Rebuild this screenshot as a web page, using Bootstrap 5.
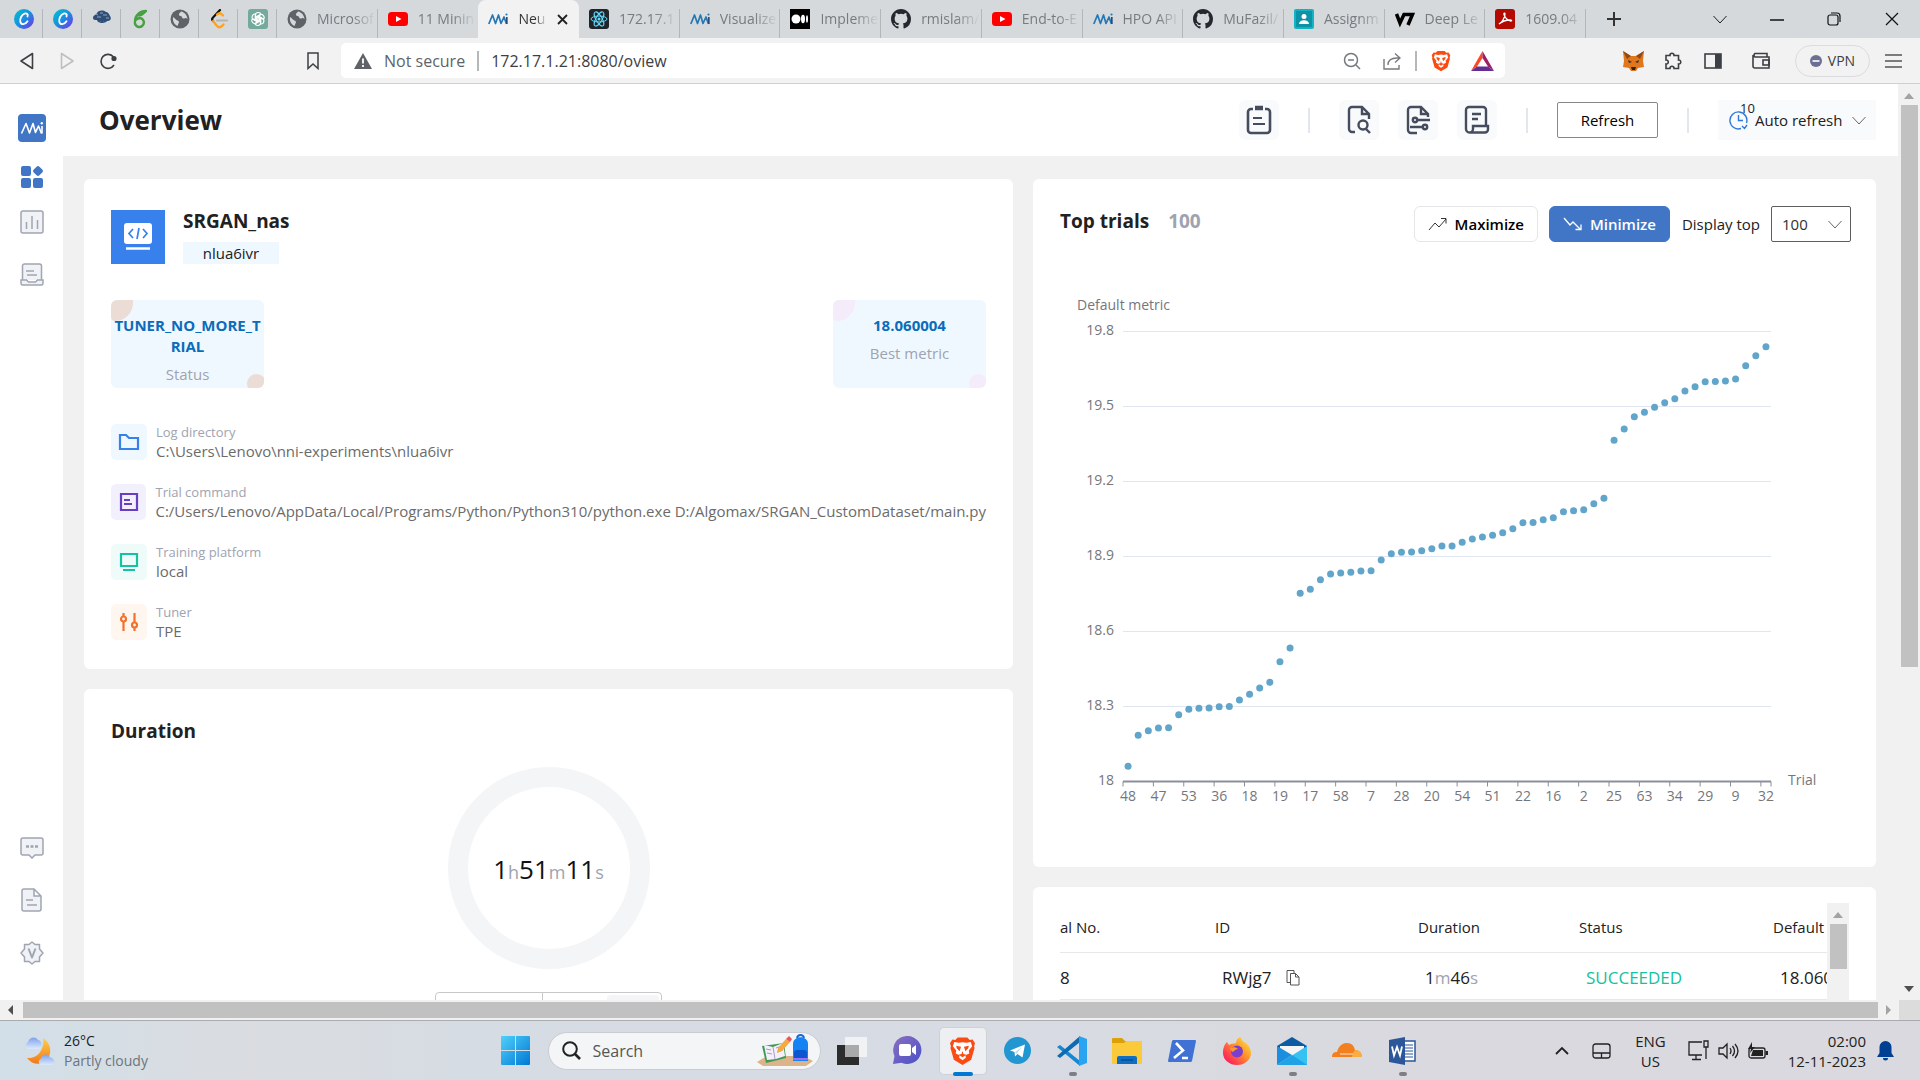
<!DOCTYPE html>
<html lang="en">
<head>
<meta charset="utf-8">
<meta name="viewport" content="width=device-width, initial-scale=1">
<title>Neural Network Intelligence</title>
<link href="https://cdn.jsdelivr.net/npm/bootstrap@5.3.0/dist/css/bootstrap.min.css" rel="stylesheet">
<style>
  body { font-family: "Open Sans", "Noto Sans", sans-serif; font-size: 15px; line-height: 20px; color: #212121; }
  svg { display: block; flex: none; }
  button, select { font-family: inherit; }
  .plain { background: none; border: 0; padding: 0; color: inherit; }

  /* browser tabs */
  .tabstrip { height: 38px; background: #d5d9dc; padding-left: 4px; }
  .tab-item { height: 38px; padding-left: 10px; font-size: 14px; color: #777b7f; position: relative; white-space: nowrap; text-decoration: none; overflow: hidden; }
  .tab-item::after { content: ""; position: absolute; right: 0; top: 9px; bottom: 0; width: 1px; background: #b4b7ba; }
  .tab-pin { width: 39px; flex: none; }
  .tab-wide { flex: 1 1 0; min-width: 0; padding-right: 2px; }
  .tab-label { flex: 1; min-width: 0; margin-left: 10px; overflow: hidden; -webkit-mask-image: linear-gradient(90deg, #000 60%, transparent); mask-image: linear-gradient(90deg, #000 60%, transparent); }
  .tab-on { background: #f2f2f2; border-radius: 8px 8px 0 0; color: #333; }
  .tab-on::after, .tab-prev::after { display: none; }
  .tab-on .tab-label { flex: none; width: 29px; }
  .tab-close { margin-left: 10px; }
  .win-tools { width: 334px; flex: none; color: #222; }

  /* address bar */
  .toolbar { height: 46px; background: #f2f2f2; border-bottom: 1px solid #cfd0d2; color: #3c3f43; padding: 0 18px 0 19px; }
  .nav-tools { width: 322px; gap: 23px; }
  .bookmark { margin: 0 22px 0 auto; }
  .url-box { height: 35px; background: #fff; border-radius: 5px; padding: 0 11px 0 13px; font-size: 16px; color: #5f6368; gap: 12px; }
  .url-field { border: 0; outline: 0; background: none; color: #3c4043; padding: 0; min-width: 0; }
  .v-rule { width: 2px; height: 20px; background: #b5b7b9; }
  .ext-tools { padding-left: 118px; }
  .vpn { height: 32px; width: 75px; border: 1px solid #dcdcdf; border-radius: 16px; font-size: 14px; gap: 6px; }

  /* page frame */
  .viewport-row { flex: 1 1 0; min-height: 0; }
  .side { width: 63px; background: #fff; padding: 30px 0 35px; flex: none; }
  .side-link { display: block; }
  .page-head { height: 72px; background: #fff; padding: 0 22px 0 36px; }
  .page-title { font-size: 26px; font-weight: 700; line-height: 32px; margin: 0; }
  .sq-btn { width: 40px; height: 40px; background: #f8fafc; border-radius: 6px; }
  .sep { width: 2px; height: 25px; background: #e2e6ee; }
  .btn-refresh { width: 101px; height: 36px; border: 1px solid #8a8886; border-radius: 2px; background: #fff; font-size: 15px; font-weight: 500; }
  .btn-auto { width: 158px; height: 40px; background: #f8fafc; font-size: 15px; padding: 0 10px 0 11px; gap: 7px; position: relative; }
  .auto-num { position: absolute; left: 22px; top: -1px; font-size: 13px; line-height: 18px; }
  .board { background: #f1f1f1; padding: 23px 22px 0 21px; gap: 20px; }
  .board-l { flex: 929 1 0; min-width: 0; gap: 20px; }
  .board-r { flex: 843 1 0; min-width: 0; gap: 20px; }
  .panel { background: #fff; border-radius: 6px; padding: 27px; flex: none; }
  .panel-title { font-size: 19px; line-height: 24px; font-weight: 700; margin: 0; }

  /* experiment info */
  .panel-info { padding-top: 31px; }
  .panel-info .panel-title { line-height: 22px; }
  .exp-mark { width: 54px; height: 54px; background: #3881ed; }
  .exp-id { width: 96px; height: 22px; background: #f0f8ff; text-align: center; line-height: 22px; font-size: 15px; }
  .metric-box { width: 153px; height: 88px; background: #f0f8ff; border-radius: 6px; text-align: center; padding-top: 15px; position: relative; overflow: hidden; color: #9ea3b0; }
  .metric-box b { display: block; position: relative; color: #0a6cba; font-weight: 700; font-size: 15px; line-height: 21px; margin-bottom: 7px; word-break: break-all; }
  .metric-box::before, .metric-box::after { content: ""; position: absolute; background: var(--tint); }
  .metric-box::before { left: 0; top: 0; width: 22px; height: 21px; border-radius: 0 0 18px 4px; }
  .metric-box::after { right: -2px; bottom: -5px; width: 19px; height: 19px; border-radius: 50%; }
  .tint-warm { --tint: #ecdcd6; }
  .tint-pink { --tint: #f4ecfa; }
  .info-list { gap: 22px; margin: 36px 0 0; }
  .info-ico { width: 36px; height: 36px; border-radius: 5px; }
  .info-list dt { font-weight: 400; font-size: 13px; line-height: 17px; color: #9ea3b0; }
  .info-list dd { margin: 0; color: #6b6b6b; line-height: 21px; white-space: nowrap; font-size: 15px; }

  /* duration */
  .panel-duration { padding-top: 30px; }
  .ring { width: 202px; height: 202px; border: 20px solid #f3f5f7; border-radius: 50%; font-size: 26px; line-height: 32px; color: #111; padding-top: 4px; margin: 24px auto 0; }
  .ring small, .unit { color: #9ea3b0; }
  .ring small { font-size: 18px; }
  .limit-box { width: 227px; height: 48px; border: 1px solid #c8c8c8; border-radius: 4px; margin: 23px auto 0; }
  .limit-box div { width: 107px; border-right: 1px solid #c8c8c8; }
  .limit-box span { width: 52px; height: 40px; margin: 2px; background: #f3f5f7; border-radius: 4px; }

  /* top trials */
  .panel-trials { height: 688px; padding-left: 0; padding-right: 0; }
  .trials-head { padding: 0 25px 0 27px; }
  .trials-head .panel-title { line-height: 30px; align-self: flex-start; }
  .btn-mode { height: 36px; border: 1px solid #e4e6ea; border-radius: 6px; font-size: 15px; font-weight: 600; background: #fff; padding: 0 13px; gap: 8px; }
  .btn-mode-on { background: #4175c5; border-color: #4175c5; color: #fff; }
  .top-select { width: 80px; height: 36px; border: 1px solid #605e5c; border-radius: 2px; appearance: none; font-size: 15px; padding: 0 10px; color: #323130; background: #fff url("data:image/svg+xml,%3Csvg xmlns='http://www.w3.org/2000/svg' width='14' height='9' fill='none' stroke='%23666'%3E%3Cpath d='M.5 1l6.500 7 6.500-7'/%3E%3C/svg%3E") no-repeat right 8px center; }
  .chart text { font-size: 14px; fill: #75767c; font-family: "Open Sans", sans-serif; }

  /* trial table */
  .panel-table { padding-top: 16px; padding-bottom: 0; }
  .trial-scroll { height: 140px; overflow: hidden; }
  .trial-grid { table-layout: fixed; width: 100%; white-space: nowrap; }
  .trial-grid th { font-weight: 500; font-size: 15px; height: 49px; padding: 0; border-bottom: 1px solid #e8e8e8; overflow: hidden; }
  .trial-grid td { height: 47px; padding: 4px 0 0 7px; font-size: 17px; border-bottom: 1px solid #e8e8e8; overflow: hidden; }
  .trial-grid td:first-child { padding-left: 0; }
  .c-no { width: 155px; } .c-id { width: 203px; } .c-dur { width: 161px; } .c-st { width: 194px; }
  .ok { color: #13c2a0; }

  /* scrollbars */
  .bar-v { width: 22px; background: #f1f1f1; flex: none; padding: 9px 0 8px; }
  .bar-v i, .bar-h i { background: #c1c1c1; }
  .bar-v i { width: 17px; height: 562px; margin-top: 6px; }
  .bar-t { padding: 9px 0; }
  .bar-t i { height: 45px; margin-top: 6px; }
  .bar-h { height: 20px; background: #f1f1f1; flex: none; }
  .bar-h i { height: 16px; margin: 2px 7px 0; }
  .bar-corner { width: 21px; height: 20px; background: #dcdcdc; }

  /* taskbar */
  .taskbar { height: 60px; flex: none; border-top: 1px solid #a9abae; background: linear-gradient(90deg, #d2dfe8 0, #dadce0 250px, #d6dce4 500px, #d7dbe3 950px, #d9dae0 1300px, #d9d9df 100%); font-size: 14px; }
  .task-l, .task-r { flex: 1 1 0; }
  .task-l { padding-left: 24px; gap: 9px; }
  .task-r { padding-right: 26px; font-size: 15px; }
  .task-mid { margin-left: 12px; }
  .start-btn { margin-right: 18px; }
  .search-pill { width: 273px; height: 38px; border-radius: 19px; background: #f3f5f7; border: 1px solid #c9ccd1; padding: 0 6px 0 13px; gap: 12px; margin-right: 4px; }
  .search-pill input { flex: 1; min-width: 0; border: 0; outline: 0; background: none; padding: 0; color: #555; font-size: 16px; }
  .search-pill input::placeholder { color: #555; opacity: 1; }
  .task-app { width: 55px; height: 58px; position: relative; }
  .task-app.running::after { content: ""; position: absolute; left: 24px; bottom: 4px; width: 8px; height: 4px; border-radius: 2px; background: #7f7f83; }
  .task-app.focused::before { content: ""; position: absolute; left: 4px; top: 5px; width: 48px; height: 48px; border-radius: 5px; background: #eeeff3; border: 1px solid #cfd1d6; }
  .task-app.focused::after { content: ""; position: absolute; left: 18px; bottom: 4px; width: 20px; height: 4px; border-radius: 2px; background: #0078d4; }
  .task-app svg { position: relative; }
</style>
<script src="https://cdn.jsdelivr.net/npm/bootstrap@5.3.0/dist/js/bootstrap.bundle.min.js"></script>
</head>
<body class="d-flex flex-column vh-100 overflow-hidden">

<svg width="0" height="0" class="position-absolute" aria-hidden="true">
  <defs>
    <linearGradient id="gCanva" x1="0" y1="0" x2="1" y2="1"><stop offset="0" stop-color="#00c4cc"/><stop offset=".5" stop-color="#1a8fe0"/><stop offset="1" stop-color="#7d2ae8"/></linearGradient>
    <linearGradient id="gWin" x1="0" y1="0" x2="1" y2="1"><stop offset="0" stop-color="#4fd1fb"/><stop offset="1" stop-color="#0277d4"/></linearGradient>
    <linearGradient id="gChat" x1="0" y1="0" x2="1" y2="1"><stop offset="0" stop-color="#8b6fc0"/><stop offset="1" stop-color="#4a50c8"/></linearGradient>
    <linearGradient id="gFire" x1="1" y1="0" x2="0" y2="1"><stop offset="0" stop-color="#fff04a"/><stop offset=".4" stop-color="#ff9a2a"/><stop offset=".8" stop-color="#ff2e55"/><stop offset="1" stop-color="#e01590"/></linearGradient>
    <linearGradient id="gMoon" x1="0" y1="0" x2="0" y2="1"><stop offset="0" stop-color="#ffd04a"/><stop offset="1" stop-color="#f07a1c"/></linearGradient>
    <linearGradient id="gCloud" x1="0" y1="0" x2="0" y2="1"><stop offset="0" stop-color="#7ea3ea"/><stop offset="1" stop-color="#dce9fd"/></linearGradient>
    <symbol id="canva" viewBox="0 0 20 20"><circle cx="10" cy="10" r="10" fill="url(#gCanva)"/><path d="M13.500 7.500c1-2-.8-3.700-2.900-2.900C7.500 5.800 5.700 9.800 6.300 12.800c.7 3.400 5 3 7.200-.6" fill="none" stroke="#fff" stroke-width="1.800" stroke-linecap="round"/></symbol>
    <symbol id="globe" viewBox="0 0 20 20"><circle cx="10" cy="10" r="9.500" fill="#5f6368"/><path d="M3 8c2 1 3 3 4.500 3.500s2 2 .8 3.200c-.3 1-.5 1.600-.8 2.300C4 15.500 2.500 12 3 8zM11 2.500c-1 1.500-2.500 2-2 3.500s2.500.5 3 2c.4 1.500 1.500 2 3 1.200 1-.6 1.600 0 2.500 1-.3-4-3-7-6.500-7.700z" fill="#d5d9dc"/></symbol>
    <symbol id="yt" viewBox="0 0 20 20"><rect y="3" width="20" height="14" rx="3.500" fill="#f00"/><path d="M8 7l5.500 3L8 13z" fill="#fff"/></symbol>
    <symbol id="nni" viewBox="0 0 20 20"><path d="M.8 15L4.500 6l3 8.500L10.500 6l2.500 8.500L16 8l2.500 7" fill="none" stroke="#2577b5" stroke-width="1.700" stroke-linejoin="round"/><path d="M18.800 8v7" stroke="#274b7a" stroke-width="1.700"/><circle cx="18.500" cy="5.500" r="1.100" fill="#2577b5"/></symbol>
    <symbol id="git" viewBox="0 0 16 16"><path fill="#24292f" d="M8 0C3.580 0 0 3.580 0 8c0 3.540 2.290 6.530 5.470 7.590.4.070.55-.17.55-.38 0-.19-.01-.82-.01-1.490-2.010.37-2.530-.49-2.690-.94-.09-.23-.48-.94-.82-1.130-.28-.15-.68-.52-.01-.53.63-.01 1.080.58 1.230.82.72 1.210 1.870.87 2.330.66.07-.52.28-.87.51-1.070-1.780-.2-3.640-.89-3.640-3.950 0-.87.31-1.590.82-2.150-.08-.2-.36-1.020.08-2.120 0 0 .67-.21 2.200.82a7.600 7.600 0 0 1 4 0c1.530-1.040 2.200-.82 2.200-.82.44 1.100.16 1.920.08 2.120.51.56.82 1.270.82 2.150 0 3.070-1.870 3.750-3.650 3.950.29.25.54.73.54 1.480 0 1.070-.01 1.930-.01 2.200 0 .21.15.46.55.38A8.010 8.010 0 0 0 16 8c0-4.420-3.580-8-8-8z"/></symbol>
    <symbol id="brave" viewBox="0 0 28 30"><path d="M9 1h10l2.500 2.500 3-.3L27 7l-1 3 .5 2-3.500 12-9 5.500L5 24 1.500 12 2 10 1 7l2.500-3.800 3 .3z" fill="#fb4b13"/><path d="M14 6l4 .5 4.500-.8L24 10l-3.500 4.500.5 3-4 2 .5 2.500L14 24.500 10.500 22l.5-2.500-4-2 .5-3L4 10l1.500-4.300L10 6.500z" fill="#fff"/><path d="M7.500 9.500l5 1.200-1.500 4.500-3-3zM20.500 9.500l-5 1.200 1.500 4.500 3-3zM14 15l1 3 3 1-4 2.500L10 19l3-1z" fill="#fb4b13"/></symbol>
    <symbol id="chev" viewBox="0 0 14 9"><path d="M.5 1L7 8l6.500-7" fill="none" stroke="currentColor"/></symbol>
    <symbol id="up" viewBox="0 0 10 6"><path d="M0 6l5-6 5 6z"/></symbol>
  </defs>
</svg>

<!-- tab strip -->
<nav class="tabstrip d-flex flex-shrink-0" aria-label="Tabs">
  <a href="#" class="tab-item tab-pin d-flex align-items-center" aria-label="Canva"><svg width="20" height="20"><use href="#canva"/></svg></a>
  <a href="#" class="tab-item tab-pin d-flex align-items-center" aria-label="Canva"><svg width="20" height="20"><use href="#canva"/></svg></a>
  <a href="#" class="tab-item tab-pin d-flex align-items-center" aria-label="Tree"><svg width="20" height="20" viewBox="0 0 20 20"><path d="M1 9c0-3 3-3 4-5 2-3 6-3 9-1 2 0 3 2 4 4 2 3 0 5-3 5-1 2-4 1-5 0-2 2-5 1-5-1-2 0-4 0-4-2z" fill="#2f4f76"/><path d="M9 9h2v4l3 1H6l3-1z" fill="#2f4f76"/><path d="M5 8h4M11 6h4M4 5l2 1M14 9h3M8 4h3" stroke="#90a8c4"/></svg></a>
  <a href="#" class="tab-item tab-pin d-flex align-items-center" aria-label="Overleaf"><svg width="20" height="20" viewBox="0 0 20 20"><path d="M15 2C9 2 4 6 4 12.500A4.500 4.500 0 1 0 8.500 9C7 9 6 10 5 11M7 6c3 1 5-1 8-4" fill="none" stroke="#47a141" stroke-width="2.400" stroke-linecap="round"/></svg></a>
  <a href="#" class="tab-item tab-pin d-flex align-items-center" aria-label="Page"><svg width="20" height="20"><use href="#globe"/></svg></a>
  <a href="#" class="tab-item tab-pin d-flex align-items-center" aria-label="LeetCode"><svg width="20" height="20" viewBox="0 0 20 20" fill="none" stroke-width="2.200" stroke-linecap="round"><path d="M11 1L4 8.500c-1 1-1 2.500 0 3.500" stroke="#111"/><path d="M4 12l4 5c1.500 1.500 3.500 1.500 5 0l1.500-1.500M8 5.500c1.500-1.500 3.500-1.500 5 0l1 1" stroke="#ffa116"/><path d="M8 11.500h10" stroke="#b3b3b3"/></svg></a>
  <a href="#" class="tab-item tab-pin d-flex align-items-center" aria-label="ChatGPT"><svg width="20" height="20" viewBox="0 0 20 20"><rect width="20" height="20" rx="3" fill="#74aa9c"/><g fill="none" stroke="#fff" stroke-width="1.100"><path id="pet" d="M7.200 11.500V6.800C7.200 3 12 2.400 13 5.500L8.800 8v3.500"/><use href="#pet" transform="rotate(60 10 10)"/><use href="#pet" transform="rotate(120 10 10)"/><use href="#pet" transform="rotate(180 10 10)"/><use href="#pet" transform="rotate(240 10 10)"/><use href="#pet" transform="rotate(300 10 10)"/></g></svg></a>
  <a href="#" class="tab-item tab-wide d-flex align-items-center"><svg width="20" height="20"><use href="#globe"/></svg><span class="tab-label">Microsof</span></a>
  <a href="#" class="tab-item tab-wide tab-prev d-flex align-items-center"><svg width="20" height="20"><use href="#yt"/></svg><span class="tab-label">11 Minin</span></a>
  <a href="#" class="tab-item tab-wide tab-on d-flex align-items-center" aria-current="page"><svg width="20" height="20"><use href="#nni"/></svg><span class="tab-label">Neu</span><svg class="tab-close" width="11" height="11" viewBox="0 0 11 11"><path d="M1 1l9 9M10 1l-9 9" stroke="#222" stroke-width="1.800"/></svg></a>
  <a href="#" class="tab-item tab-wide d-flex align-items-center"><svg width="20" height="20" viewBox="0 0 20 20"><rect width="20" height="20" rx="3" fill="#20232a"/><g fill="none" stroke="#61dafb"><ellipse cx="10" cy="10" rx="8" ry="3"/><ellipse cx="10" cy="10" rx="8" ry="3" transform="rotate(60 10 10)"/><ellipse cx="10" cy="10" rx="8" ry="3" transform="rotate(120 10 10)"/></g><circle cx="10" cy="10" r="1.500" fill="#61dafb"/></svg><span class="tab-label">172.17.1</span></a>
  <a href="#" class="tab-item tab-wide d-flex align-items-center"><svg width="20" height="20"><use href="#nni"/></svg><span class="tab-label">Visualize</span></a>
  <a href="#" class="tab-item tab-wide d-flex align-items-center"><svg width="20" height="20" viewBox="0 0 20 20"><rect width="20" height="20"/><g fill="#fff"><circle cx="6" cy="10" r="4.500"/><ellipse cx="13" cy="10" rx="2" ry="4.200"/><ellipse cx="17" cy="10" rx="1" ry="3.800"/></g></svg><span class="tab-label">Impleme</span></a>
  <a href="#" class="tab-item tab-wide d-flex align-items-center"><svg width="20" height="20"><use href="#git"/></svg><span class="tab-label">rmislam/</span></a>
  <a href="#" class="tab-item tab-wide d-flex align-items-center"><svg width="20" height="20"><use href="#yt"/></svg><span class="tab-label">End-to-E</span></a>
  <a href="#" class="tab-item tab-wide d-flex align-items-center"><svg width="20" height="20"><use href="#nni"/></svg><span class="tab-label">HPO API</span></a>
  <a href="#" class="tab-item tab-wide d-flex align-items-center"><svg width="20" height="20"><use href="#git"/></svg><span class="tab-label">MuFazil/</span></a>
  <a href="#" class="tab-item tab-wide d-flex align-items-center"><svg width="20" height="20" viewBox="0 0 20 20"><rect width="20" height="20" rx="2" fill="#15b1c5"/><rect x="2" y="2" width="16" height="16" fill="#0d93a6"/><circle cx="10" cy="7.500" r="2.500" fill="#fff"/><path d="M5 15c0-5 10-5 10 0z" fill="#fff"/></svg><span class="tab-label">Assignm</span></a>
  <a href="#" class="tab-item tab-wide d-flex align-items-center"><svg width="20" height="20" viewBox="0 0 20 20" fill="none" stroke="#000" stroke-width="3.500"><path d="M1.500 5L5 14 9 5.500h8.500L13 16"/></svg><span class="tab-label">Deep Le</span></a>
  <a href="#" class="tab-item tab-wide d-flex align-items-center"><svg width="20" height="20" viewBox="0 0 20 20"><rect width="20" height="20" rx="3" fill="#b30b00"/><path d="M4 15c3-1 6-7 6-10 0-1.500-1.500-1-1 .5C10 9 13 12 16 12c1 0 1-1-1-1-3 0-8 1.500-11 4z" fill="none" stroke="#fff" stroke-width="1.300"/></svg><span class="tab-label">1609.04</span></a>
  <div class="win-tools d-flex align-items-center">
    <button class="plain" aria-label="New tab" style="margin:0 91px 0 20px"><svg width="16" height="16"><path d="M8 1v14M1 8h14" stroke="#333" stroke-width="2"/></svg></button>
    <button class="plain" aria-label="Search tabs"><svg width="14" height="9"><use href="#chev"/></svg></button>
    <button class="plain" aria-label="Minimise" style="margin:0 43px"><svg width="14" height="9"><path d="M0 5h14" stroke="#111" stroke-width="1.500"/></svg></button>
    <button class="plain" aria-label="Restore" style="margin-right:44px"><svg width="14" height="14" fill="none" stroke="#111" stroke-width="1.200"><rect x="1" y="3" width="10" height="10" rx="2"/><path d="M4 1h6a3 3 0 0 1 3 3v6"/></svg></button>
    <button class="plain" aria-label="Close window"><svg width="14" height="14"><path d="M1 1l12 12M13 1L1 13" stroke="#111" stroke-width="1.200"/></svg></button>
  </div>
</nav>

<!-- address bar -->
<div class="toolbar d-flex align-items-center flex-shrink-0">
  <div class="nav-tools d-flex align-items-center">
    <button class="plain" aria-label="Back"><svg width="17" height="18" fill="none" stroke="#3c3f43" stroke-width="1.600" stroke-linejoin="round"><path d="M13.500 1.500v15L2 9z"/></svg></button>
    <button class="plain" aria-label="Forward"><svg width="17" height="18" fill="none" stroke="#bdbfc1" stroke-width="1.600" stroke-linejoin="round"><path d="M2.500 1.500v15L14 9z"/></svg></button>
    <button class="plain" aria-label="Reload"><svg width="18" height="18" fill="none" stroke="#3c3f43" stroke-width="1.600"><path d="M15 13a7 7 0 1 1-.5-8"/><circle cx="15" cy="6.500" r="1.800" fill="#3c3f43"/></svg></button>
    <button class="plain bookmark" aria-label="Bookmark"><svg width="12" height="18" fill="none" stroke="#3c3f43" stroke-width="1.500"><path d="M1 1h10v15.500l-5-4.500-5 4.500z"/></svg></button>
  </div>
  <div class="url-box d-flex align-items-center flex-grow-1">
    <svg width="18" height="16" viewBox="0 0 18 16"><path d="M9 0l9 16H0z" fill="#5f6368"/><path d="M9 5.500v5M9 12v2" stroke="#fff" stroke-width="1.800"/></svg>
    <label for="addr">Not secure</label>
    <span class="v-rule"></span>
    <input class="url-field flex-grow-1" id="addr" type="text" value="172.17.1.21:8080/oview">
    <button class="plain" aria-label="Zoom" style="margin-right:10px"><svg width="18" height="18" fill="none" stroke="#777b7f" stroke-width="1.500"><circle cx="8" cy="8" r="6.500"/><path d="M13 13l4 4M5 8h6"/></svg></button>
    <button class="plain" aria-label="Share" style="margin-right:2px"><svg width="18" height="18" fill="none" stroke="#777b7f" stroke-width="1.400"><path d="M1 7v10h15v-4M5 13c0-5 3-7 9-7h2M12 1.500L17 6l-5 4.500"/></svg></button>
    <span class="v-rule"></span>
    <button class="plain" aria-label="Brave Shields" style="margin:0 8px 0 2px"><svg width="20" height="22"><use href="#brave"/></svg></button>
    <button class="plain" aria-label="Rewards"><svg width="23" height="20" viewBox="0 0 23 20"><path d="M11.500 0L0 20l6-4.500L11.500 7z" fill="#ff4724"/><path d="M11.500 0L23 20l-6-4.500L11.500 7z" fill="#9e1f63"/><path d="M0 20h23l-6-4.500H6z" fill="#662d91"/></svg></button>
  </div>
  <div class="ext-tools d-flex align-items-center">
    <svg width="21" height="20" viewBox="0 0 21 20"><path d="M0 0l8 5h5l8-5-1 10 1 6-6 1-2 3H8l-2-3-6-1 1-6z" fill="#e2761b"/><path d="M5 9l4 2-3 1zM16 9l-4 2 3 1z" fill="#233447"/><path d="M8 16h5l-1 3H9z" fill="#33241b"/><path d="M0 0l8 5-4 3zM21 0l-8 5 4 3z" fill="#8f4a17"/></svg>
    <button class="plain" aria-label="Extensions" style="margin:0 22px 0 20px"><svg width="18" height="18" fill="none" stroke="#3c3f43" stroke-width="1.600"><path d="M2 3.500h4c-.7-3 4.500-3 4 0h4.500V8c3-.5 3 4.500 0 4v4.500H10c.5-3-4.500-3-4 0H2V12c3 .5 3-4.500 0-4z"/></svg></button>
    <button class="plain" aria-label="Side panel"><svg width="18" height="16"><rect x="1" y="1" width="16" height="14" fill="none" stroke="#3c3f43" stroke-width="1.600"/><path d="M11 1h6v14h-6z" fill="#3c3f43"/></svg></button>
    <button class="plain" aria-label="Wallet" style="margin:0 25px 0 30px"><svg width="18" height="17" fill="none" stroke="#3c3f43" stroke-width="1.600"><path d="M15 5V1.500H3a2 2 0 0 0 0 3.500h14v11H3a2 2 0 0 1-2-2V3"/><rect x="11" y="8" width="6" height="5"/></svg></button>
    <button class="plain vpn d-flex align-items-center justify-content-center"><svg width="12" height="12"><circle cx="6" cy="6" r="6" fill="#6b7093"/><path d="M2.500 6h7" stroke="#fff" stroke-width="1.600"/></svg>VPN</button>
    <button class="plain" aria-label="Menu" style="margin-left:15px"><svg width="17" height="14"><path d="M0 1h17M0 7h17M0 13h17" stroke="#555" stroke-width="1.600"/></svg></button>
  </div>
</div>

<!-- page -->
<div class="viewport-row d-flex overflow-hidden">
  <nav class="side d-flex flex-column align-items-center" aria-label="Main">
    <a class="side-link" href="#" aria-label="NNI"><svg width="28" height="28" viewBox="0 0 28 28"><rect width="28" height="28" rx="4" fill="#4175c5"/><path d="M3.500 19.500L8 9.500l3.500 9.500L15 9.500 17.500 18.500l3-6.500 3 7.500" fill="none" stroke="#fff" stroke-width="1.600" stroke-linejoin="round"/><path d="M24 12v7.500" stroke="#fff" stroke-width="1.600"/><circle cx="23.800" cy="9.200" r="1.200" fill="#fff"/></svg></a>
    <a class="side-link" href="#" aria-label="Overview" style="margin-top:24px"><svg width="22" height="22" fill="#4175c5"><rect width="10" height="10" rx="2"/><rect y="12" width="10" height="10" rx="2"/><rect x="12" y="12" width="10" height="10" rx="2"/><rect x="13" y="1" width="8" height="8" rx="2" transform="rotate(45 17 5)"/></svg></a>
    <a class="side-link" href="#" aria-label="Trials detail" style="margin-top:22px"><svg width="24" height="24" fill="#f0f2f6" stroke="#9fa5b3" stroke-width="1.500"><rect x="1" y="1" width="22" height="22" rx="2"/><path d="M6.500 12v7M12 6v13M17.500 10v9"/></svg></a>
    <a class="side-link" href="#" aria-label="Experiment management" style="margin-top:29px"><svg width="24" height="24" fill="#f0f2f6" stroke="#9fa5b3" stroke-width="1.500"><path d="M2.500 17V3a2 2 0 0 1 2-2h15a2 2 0 0 1 2 2v14M6 8h8M7 12h10"/><path d="M1 17h5.500l2 2h7l2-2H23v3.500a1.500 1.500 0 0 1-1.500 1.500h-19A1.500 1.500 0 0 1 1 20.500z"/></svg></a>
    <a class="side-link mt-auto" href="#" aria-label="Feedback"><svg width="24" height="22" fill="#f0f2f6" stroke="#9fa5b3" stroke-width="1.500"><path d="M3 1h18a2 2 0 0 1 2 2v13a2 2 0 0 1-2 2h-6l-3 3-3-3H3a2 2 0 0 1-2-2V3a2 2 0 0 1 2-2z"/><path d="M6 9.500h3M10.500 9.500h3M15 9.500h3" stroke-width="2.500"/></svg></a>
    <a class="side-link" href="#" aria-label="Document" style="margin:29px 0"><svg width="22" height="24" fill="#f0f2f6" stroke="#9fa5b3" stroke-width="1.500"><path d="M3 1h10l7 7v13a2 2 0 0 1-2 2H3a2 2 0 0 1-2-2V3a2 2 0 0 1 2-2zM13 1v7h7M5 12h7M6 17h10"/></svg></a>
    <a class="side-link" href="#" aria-label="Version"><svg width="24" height="24" fill="#f0f2f6" stroke="#9fa5b3" stroke-width="1.500" stroke-linejoin="round"><path d="M12 1l3 2.500h4.500V8L23 12l-3.500 4v4.500H15L12 23l-3-2.500H4.500V16L1 12l3.500-4V3.500H9z"/><path d="M8.500 7.500L12 16.500l3.500-9" fill="none" stroke-width="2"/></svg></a>
  </nav>

  <div class="d-flex flex-column flex-grow-1" style="min-width:0">
    <header class="page-head d-flex align-items-center flex-shrink-0">
      <h1 class="page-title me-auto">Overview</h1>
      <button class="plain sq-btn d-flex align-items-center justify-content-center" aria-label="Experiment summary"><svg width="26" height="30" fill="none" stroke="#454c5e" stroke-width="2.600"><path d="M7 4H5a3 3 0 0 0-3 3v18a3 3 0 0 0 3 3h16a3 3 0 0 0 3-3V7a3 3 0 0 0-3-3h-2"/><path d="M9 3h8" stroke-width="4.500"/><path d="M7 13h9M7 19h12" stroke-width="2.200"/></svg></button>
      <span class="sep" style="margin:0 29px"></span>
      <button class="plain sq-btn d-flex align-items-center justify-content-center" aria-label="Search space"><svg width="26" height="30" fill="none" stroke="#454c5e" stroke-width="2.400"><path d="M9 27H6a3 3 0 0 1-3-3V5a3 3 0 0 1 3-3h10l7 7v5M16 2v7h7"/><circle cx="17" cy="20" r="4.500"/><path d="M20 24l4 4"/></svg></button>
      <button class="plain sq-btn d-flex align-items-center justify-content-center" aria-label="Config" style="margin:0 19px"><svg width="26" height="30" fill="none" stroke="#454c5e" stroke-width="2.400"><path d="M12 28H6a3 3 0 0 1-3-3V5a3 3 0 0 1 3-3h10l7 7v3M16 2v7h7M12 15h13M5 22h12"/><circle cx="10" cy="15" r="2.200"/><circle cx="20" cy="22" r="2.200"/></svg></button>
      <button class="plain sq-btn d-flex align-items-center justify-content-center" aria-label="Log files"><svg width="26" height="30" fill="none" stroke="#454c5e" stroke-width="2.400"><path d="M22 20V5a3 3 0 0 0-3-3H5a3 3 0 0 0-3 3v19a3.500 3.500 0 0 0 3.500 3.500H21a3 3 0 0 0 3-3V21H9v3a3.500 3.500 0 0 1-3.500 3.500M8 9h9M8 14h6"/></svg></button>
      <span class="sep" style="margin:0 29px"></span>
      <button class="btn-refresh">Refresh</button>
      <span class="sep" style="margin:0 29px"></span>
      <button class="plain btn-auto d-flex align-items-center"><svg width="19" height="20" fill="none" stroke="#3079d8" stroke-width="1.400"><path d="M12 18.500a8.500 8.500 0 1 1 5.500-5.500M9.500 5v5.500H14M13 16l2.500 2.500L18 15"/></svg><span class="auto-num">10</span>Auto refresh<svg class="ms-auto" width="14" height="9" color="#666"><use href="#chev"/></svg></button>
    </header>

    <main class="board d-flex flex-grow-1 overflow-hidden">
      <div class="board-l d-flex flex-column">
        <section class="panel panel-info">
          <div class="d-flex" style="gap:18px">
            <div class="exp-mark d-flex align-items-center justify-content-center"><svg width="28" height="28" viewBox="0 0 28 28"><rect width="28" height="21" rx="3" fill="#fff"/><path d="M9 6l-4 4.500L9 15M19 6l4 4.500L19 15M15 5l-2 11" fill="none" stroke="#3881ed" stroke-width="1.700"/><path d="M2 25.500h24" stroke="#fff" stroke-width="2.500"/></svg></div>
            <div class="d-flex flex-column justify-content-between"><h2 class="panel-title">SRGAN_nas</h2><div class="exp-id">nlua6ivr</div></div>
          </div>
          <div class="d-flex justify-content-between" style="margin-top:36px">
            <div class="metric-box tint-warm"><b>TUNER_NO_MORE_TRIAL</b>Status</div>
            <div class="metric-box tint-pink"><b>18.060004</b>Best metric</div>
          </div>
          <dl class="info-list d-flex flex-column">
            <div class="d-flex" style="gap:9px"><span class="info-ico d-flex align-items-center justify-content-center" style="background:#f0f8ff"><svg width="22" height="18" fill="none" stroke="#3881ed" stroke-width="2.200"><path d="M2 2h6l3 3h9v11H2z"/></svg></span><div><dt>Log directory</dt><dd>C:\Users\Lenovo\nni-experiments\nlua6ivr</dd></div></div>
            <div class="d-flex" style="gap:9px"><span class="info-ico d-flex align-items-center justify-content-center" style="background:#f3f0fe"><svg width="20" height="20" fill="none" stroke="#6a3ec2" stroke-width="2.200"><path d="M2 2h16v16H2zM5 8h6M5 12h8"/></svg></span><div><dt>Trial command</dt><dd>C:/Users/Lenovo/AppData/Local/Programs/Python/Python310/python.exe D:/Algomax/SRGAN_CustomDataset/main.py</dd></div></div>
            <div class="d-flex" style="gap:9px"><span class="info-ico d-flex align-items-center justify-content-center" style="background:#effbf8"><svg width="20" height="20" fill="none" stroke="#15c3a4" stroke-width="2.200"><path d="M2 2h16v12H2zM4 18h12"/></svg></span><div><dt>Training platform</dt><dd>local</dd></div></div>
            <div class="d-flex" style="gap:9px"><span class="info-ico d-flex align-items-center justify-content-center" style="background:#fff6ef"><svg width="20" height="20" fill="none" stroke="#f2722b" stroke-width="2.200"><circle cx="4.500" cy="7" r="2.500"/><circle cx="15.500" cy="13" r="2.500"/><path d="M4.500 1v3M4.500 10v9M15.500 1v9M15.500 16v3"/></svg></span><div><dt>Tuner</dt><dd>TPE</dd></div></div>
          </dl>
        </section>
        <section class="panel panel-duration">
          <h2 class="panel-title">Duration</h2>
          <div class="ring d-flex align-items-center justify-content-center"><span>1<small>h</small>51<small>m</small>11<small>s</small></span></div>
          <div class="limit-box d-flex justify-content-between"><div></div><span></span></div>
        </section>
      </div>

      <div class="board-r d-flex flex-column">
        <section class="panel panel-trials">
          <div class="trials-head d-flex align-items-center">
            <h2 class="panel-title">Top trials</h2><span class="panel-title unit" style="margin-left:19px">100</span>
            <button class="btn-mode d-flex align-items-center ms-auto"><svg width="19" height="14" fill="none" stroke="#333"><path d="M1 13l6-7 4 4 7-8M13 1.500h5v5"/></svg>Maximize</button>
            <button class="btn-mode btn-mode-on d-flex align-items-center" style="margin:0 12px 0 11px"><svg width="19" height="14" fill="none" stroke="#fff" stroke-width="1.300"><path d="M1 1l6 7 3-3 7 7M12.500 12.500H18v-5"/></svg>Minimize</button>
            <label for="top" style="margin-right:11px">Display top</label>
            <select class="top-select" id="top"><option>100</option></select>
          </div>
          <svg class="chart w-100" id="chart" viewBox="0 0 843 600" role="img" aria-label="Default metric by trial"></svg>
        </section>

        <section class="panel panel-table">
          <div class="trial-scroll d-flex">
            <div class="flex-grow-1 overflow-hidden">
              <table class="trial-grid">
                <colgroup><col class="c-no"><col class="c-id"><col class="c-dur"><col class="c-st"><col></colgroup>
                <thead><tr><th>al No.</th><th>ID</th><th>Duration</th><th>Status</th><th>Default</th></tr></thead>
                <tbody><tr><td>8</td><td><span class="d-flex align-items-center" style="gap:15px">RWjg7<svg width="14" height="16" fill="none" stroke="#555"><path d="M4.500 3.500h5l3.500 3.500v8h-8.500zM9.500 3.500V7H13M4 12.500H1V.500h7v2.500"/></svg></span></td><td>1<span class="unit">m</span>46<span class="unit">s</span></td><td class="ok">SUCCEEDED</td><td>18.060</td></tr></tbody>
              </table>
            </div>
            <div class="bar-v bar-t d-flex flex-column align-items-center"><svg width="10" height="6" fill="#a3a3a3"><use href="#up"/></svg><i></i></div>
          </div>
        </section>
      </div>
    </main>
  </div>

  <div class="bar-v d-flex flex-column align-items-center"><svg width="10" height="6" fill="#a3a3a3"><use href="#up"/></svg><i></i><svg class="mt-auto" width="10" height="6" fill="#505050" style="rotate:180deg"><use href="#up"/></svg></div>
</div>
<div class="bar-h d-flex">
  <svg width="16" height="20" fill="#505050"><path d="M13 5v10L8 10z"/></svg><i class="flex-grow-1"></i><svg width="14" height="20" fill="#a3a3a3"><path d="M1 5v10l5-5z"/></svg><span class="bar-corner"></span>
</div>

<!-- taskbar -->
<footer class="taskbar d-flex align-items-center">
  <div class="task-l d-flex align-items-center">
    <svg width="31" height="32" viewBox="0 0 31 32"><path d="M19 3c8 5 9 14 5 21-5 6-15 7-21-1 9 1 18-7 16-20z" fill="url(#gMoon)"/><path d="M4 14a4 4 0 0 1 0-7c1-5 8-6 10-2 4 0 5 7 1 9z" fill="url(#gCloud)"/><path d="M17 30a3.500 3.500 0 0 1 0-6.500c1-5 8-5 9-1 4 0 6 6 2 7.500z" fill="url(#gCloud)"/></svg>
    <div>26°C<br><span class="text-secondary">Partly cloudy</span></div>
  </div>
  <div class="task-mid d-flex align-items-center">
    <button class="plain start-btn" aria-label="Start"><svg width="29" height="29" fill="url(#gWin)"><path d="M1 0h13v14H0V1a1 1 0 0 1 1-1zM15 0h13a1 1 0 0 1 1 1v13H15zM0 15h14v14H1a1 1 0 0 1-1-1zM15 15h14v13a1 1 0 0 1-1 1H15z"/></svg></button>
    <div class="search-pill d-flex align-items-center">
      <svg width="19" height="19" fill="none" stroke="#222" stroke-width="2"><circle cx="8" cy="8" r="6.800"/><path d="M13 13l5 5" stroke-width="2.600"/></svg>
      <input type="search" placeholder="Search" aria-label="Search">
      <svg width="58" height="34" viewBox="0 0 58 34"><path d="M1 28l10-6h36l10 5-7 5H7z" fill="#dcb48a"/><path d="M6 12l22-3 2 15-20 5z" fill="#3f9a55"/><path d="M8 11l9 2 10-4 2 13-9 3-9 1z" fill="#f4effa"/><path d="M17 13l2 12M10 15l5 1M11 19l5 1M20 14l6-2M21 18l6-2" stroke="#a99cc4" fill="none"/><path d="M22 14l8-9 4 3-8 9-5 2z" fill="#f7a93b"/><path d="M30 5l3-3 3 3-2 3z" fill="#e8555a"/><path d="M41 4c1-4 6-4 7 0" fill="none" stroke="#1769d8" stroke-width="2"/><path d="M37 10c0-9 15-9 15 0v17H37z" fill="#1683f5"/><rect x="38" y="16" width="13" height="10" rx="3" fill="#0b57d0"/><path d="M37 24h15v2H37z" fill="#a46cf0"/></svg>
    </div>
    <button class="plain task-app d-flex align-items-center justify-content-center" aria-label="Task view"><svg width="30" height="28"><path d="M0 8h22v20H0z" fill="#2c2c2c"/><path d="M8 0h22v20H8z" fill="#f7f7f7" opacity=".8"/><path d="M8 8h14v12H8z" fill="#aaa"/></svg></button>
    <button class="plain task-app d-flex align-items-center justify-content-center" aria-label="Chat"><svg width="29" height="29"><path d="M14.500 0a14 14 0 1 1-6 26.700L0 28l1.500-8A14 14 0 0 1 14.500 0z" fill="url(#gChat)"/><rect x="6" y="8" width="12" height="12" rx="2" fill="#fff"/><path d="M19 12l4-3v10l-4-3z" fill="#fff"/></svg></button>
    <button class="plain task-app focused d-flex align-items-center justify-content-center" aria-label="Brave"><svg width="27" height="30"><use href="#brave"/></svg></button>
    <button class="plain task-app d-flex align-items-center justify-content-center" aria-label="Telegram"><svg width="27" height="27"><circle cx="13.500" cy="13.500" r="13.500" fill="#2196d0"/><path d="M6 13.500L21 7.500l-2.500 13-5-3.500-2.500 2.500-.5-4.500z" fill="#fff"/><path d="M11 15l7-5-5.500 7" fill="#bfe0f2"/></svg></button>
    <button class="plain task-app running d-flex align-items-center justify-content-center" aria-label="VS Code"><svg width="30" height="30"><path d="M0 11l3-2 20 16v5z" fill="#1389d2"/><path d="M0 20l3 2L23 6V0z" fill="#0b6cb3"/><path d="M22 0l8 3v24l-8 3z" fill="#2aa4f0"/></svg></button>
    <button class="plain task-app d-flex align-items-center justify-content-center" aria-label="File Explorer"><svg width="30" height="28"><path d="M0 2a1 1 0 0 1 1-1h9l3 3h16v5H0z" fill="#dda006"/><path d="M0 6h12l2-2h16v23H0z" fill="#fbca3a"/><path d="M5 27v-6a2 2 0 0 1 2-2h16a2 2 0 0 1 2 2v6z" fill="#0f6fc5"/><path d="M9 23h12" stroke="#0b4d91" stroke-width="1.500"/></svg></button>
    <button class="plain task-app d-flex align-items-center justify-content-center" aria-label="PowerShell"><svg width="28" height="22"><path d="M5 0h22a1 1 0 0 1 1 1l-4 20-1 1H1a1 1 0 0 1-1-1L4 1z" fill="#3f72d4"/><path d="M8 3l7 7.500L6 18M14 18h6" fill="none" stroke="#fff" stroke-width="2.600"/></svg></button>
    <button class="plain task-app d-flex align-items-center justify-content-center" aria-label="Firefox"><svg width="28" height="28"><path d="M17 0c2 2 2 4 4 5 4 2 7 6 7 11a14 12 0 0 1-28 0C0 10 2 7 4 5l2 3c3-2 5-1 7-2 0-3 2-5 4-6z" fill="url(#gFire)"/><circle cx="14" cy="14.500" r="6" fill="#7a3fd0"/><path d="M7 11c3-1 6-1 8 1-3 0-4 3-6 3z" fill="#ff9a2a"/></svg></button>
    <button class="plain task-app running d-flex align-items-center justify-content-center" aria-label="Mail"><svg width="30" height="28"><path d="M0 9L15 0l15 9v4H0z" fill="#0c59a4"/><path d="M3 9h24v10H3z" fill="#f4f4f4"/><path d="M0 9l15 9-15 10z" fill="#1b8fdd"/><path d="M30 9L0 28h30z" fill="#35c1f1"/><path d="M0 28l15-10 15 10z" fill="#1fa2e6"/></svg></button>
    <button class="plain task-app d-flex align-items-center justify-content-center" aria-label="Cloudflare"><svg width="30" height="15"><path d="M0 14c0-4 2-5 5-5C7 2 11 0 15 0c5 0 7 3 8 7 4 0 7 3 7 7z" fill="#f38020"/><path d="M20 14c1-4 2-7 4-7 3 0 6 3 6 7z" fill="#faae40"/><path d="M8 11h13" stroke="#fde3c8"/></svg></button>
    <button class="plain task-app running d-flex align-items-center justify-content-center" aria-label="Word"><svg width="27" height="28"><path d="M14 4h12v20H14z" fill="#fff" stroke="#2b579a" stroke-width="1.500"/><path d="M16 8h8M16 11h8M16 14h8M16 17h8M16 20h8" stroke="#2b579a"/><path d="M0 3l16-3v28L0 25z" fill="#2b579a"/><path d="M3 9.500l2 9 3-8.500 3 8.500 2-9" fill="none" stroke="#fff" stroke-width="1.800"/></svg></button>
  </div>
  <div class="task-r d-flex align-items-center justify-content-end">
    <svg width="14" height="9"><path d="M1 8l6-6 6 6" fill="none" stroke="#222" stroke-width="1.800"/></svg>
    <svg style="margin:0 24px 0 23px" width="19" height="16" fill="none" stroke="#222" stroke-width="1.300"><rect x="1" y="1" width="17" height="14" rx="2.500"/><path d="M1 10h17M9.500 10v5"/></svg>
    <div class="text-center" style="margin-right:22px">ENG<br>US</div>
    <svg width="21" height="21" fill="none" stroke="#222" stroke-width="1.300"><path d="M14 2H1v13h13M4 19.500h9M8 15v4M16 1h4v6h-4zM18 7v12"/></svg>
    <svg style="margin:0 9px" width="21" height="18" fill="none" stroke="#222" stroke-width="1.300"><path d="M1 6h4l4-4v14l-4-4H1zM12 6q2 3 0 6M14.500 4q4 5 0 10M17 2q6 7 0 14"/></svg>
    <svg width="20" height="18"><rect x="1" y="6" width="16" height="10" rx="2" fill="none" stroke="#222" stroke-width="1.300"/><path d="M5 8h10v6H3zM17.500 9H20v4h-2.500zM4 0L0 7h3l-1 4 5-6H4z" fill="#222"/></svg>
    <div class="text-end" style="margin:0 11px 0 20px">02:00<br>12-11-2023</div>
    <svg width="17" height="20"><path d="M8.500 0a6 6 0 0 1 6 6v6l2.500 4H0l2.500-4V6a6 6 0 0 1 6-6zM6 17h5a2.500 2.500 0 0 1-5 0z" fill="#003f91"/></svg>
  </div>
</footer>

<script>
  const metrics = [18.061,18.185,18.203,18.214,18.215,18.267,18.289,18.293,18.294,18.299,18.3,18.326,18.349,18.374,18.397,18.479,18.534,
    18.753,18.769,18.807,18.83,18.834,18.837,18.842,18.843,18.886,18.911,18.917,18.918,18.923,18.931,18.942,18.942,18.957,18.97,18.978,
    18.985,18.995,19.011,19.035,19.036,19.047,19.055,19.079,19.083,19.087,19.111,19.133,19.365,19.41,19.459,19.477,19.497,19.515,19.531,
    19.562,19.579,19.599,19.6,19.602,19.61,19.663,19.703,19.739];
  const names = [48,47,53,36,18,19,17,58,7,28,20,54,51,22,16,2,25,63,34,29,9,32];
  const left = 90, right = 738, base = 539.5, perUnit = 250;
  const step = (right - left) / metrics.length;
  const py = v => base - (v - 18) * perUnit;
  let out = '<text x="44" y="68">Default metric</text>';
  [18, 18.3, 18.6, 18.9, 19.2, 19.5, 19.8].forEach((v, i) => {
    const y = base - i * 75;
    out += `<text x="81" y="${y + 3}" text-anchor="end">${v}</text>`;
    out += `<path d="M${left} ${y}H${right}" stroke="${i ? '#e0e6f1' : '#8b8f99'}" stroke-width="${i ? 1 : 2}"/>`;
  });
  names.forEach((n, i) => {
    const x = left + i * 3 * step;
    out += `<path d="M${x} ${base}v5" stroke="#8b8f99"/><text x="${x + step / 2}" y="559" text-anchor="middle">${n}</text>`;
  });
  out += `<path d="M${right} ${base}v5" stroke="#8b8f99"/><text x="755" y="543">Trial</text>`;
  metrics.forEach((v, i) => { out += `<circle cx="${left + (i + 0.5) * step}" cy="${py(v)}" r="3.500" fill="#62a5cb"/>`; });
  document.getElementById('chart').innerHTML = out;
</script>
</body>
</html>
